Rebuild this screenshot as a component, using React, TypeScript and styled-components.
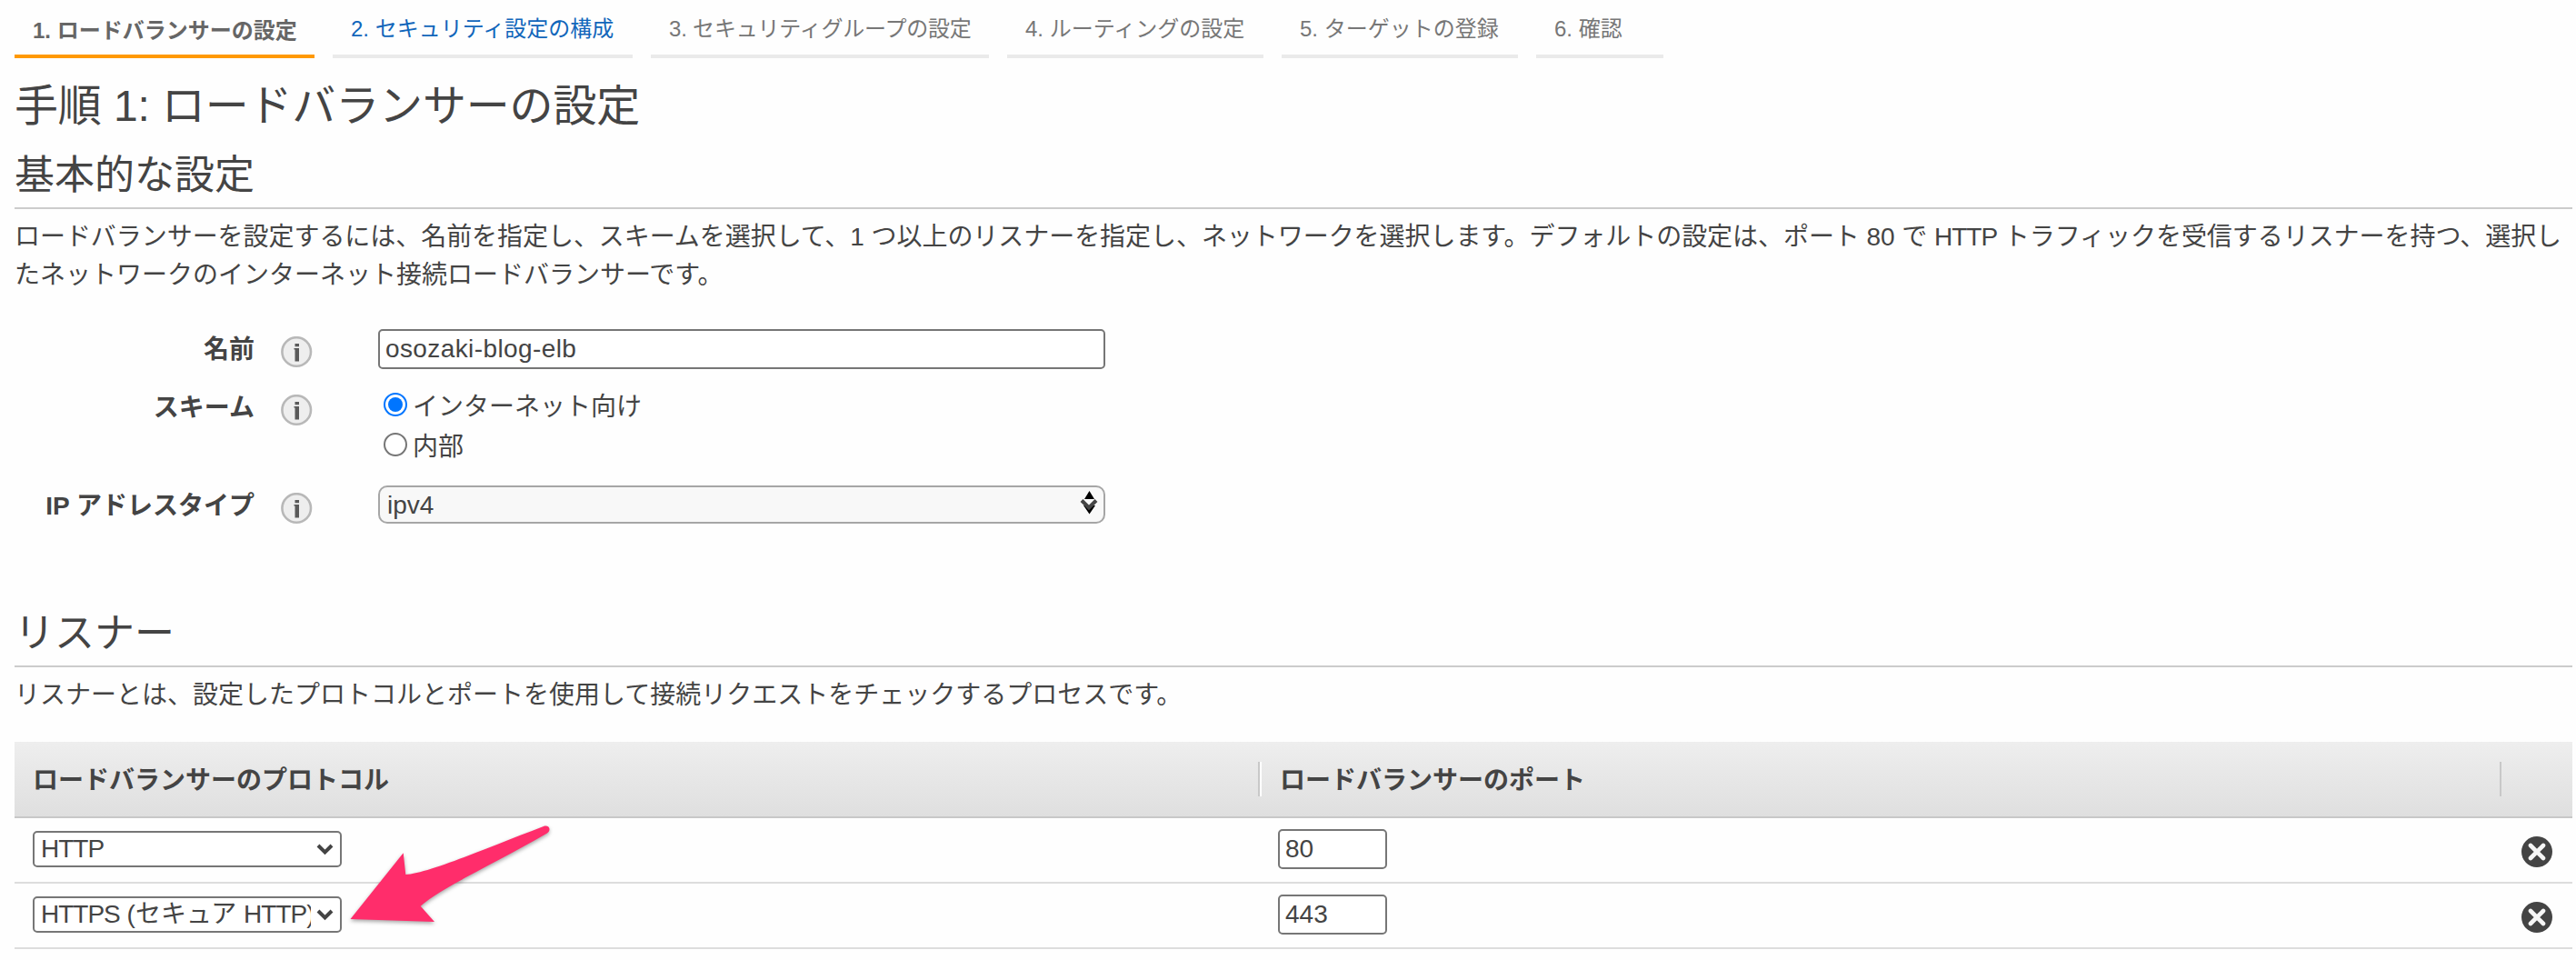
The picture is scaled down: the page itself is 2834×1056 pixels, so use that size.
import React from "react";
import styled, { createGlobalStyle } from "styled-components";

const Global = createGlobalStyle`
  *, *::before, *::after { box-sizing: border-box; }
  body { margin: 0; background: #fff; }
`;

const Page = styled.main`
  position: relative;
  width: 2834px;
  height: 1056px;
  overflow: hidden;
  padding: 0 4px 0 16px;
  background: #fefefe;
  color: #444;
  font: 28px/42px "Liberation Sans", "Noto Sans CJK JP", sans-serif;
`;

const Tabs = styled.nav`
  display: flex;
  gap: 20px;
  height: 64px;
`;

const Tab = styled.div<{ $width: number; $kind?: "active" | "link"; $track?: number }>`
  flex: none;
  width: ${(p) => p.$width}px;
  height: 64px;
  padding: ${(p) => (p.$kind === "active" ? 16 : 14)}px 0 0 20px;
  border-bottom: 4px solid ${(p) => (p.$kind === "active" ? "#ff9900" : "#eaeaea")};
  color: ${(p) => (p.$kind === "active" ? "#666" : p.$kind === "link" ? "#1166bb" : "#777")};
  font-size: 24px;
  line-height: 36px;
  font-weight: ${(p) => (p.$kind === "active" ? 700 : 400)};
  letter-spacing: ${(p) => p.$track ?? 0}px;
  white-space: nowrap;
`;

const Title = styled.h1`
  margin: 20px 0 0;
  height: 66px;
  font-size: 48px;
  line-height: 66px;
  font-weight: 400;
  letter-spacing: -0.15px;
`;

const Heading = styled.h2<{ $top: number }>`
  margin: ${(p) => p.$top}px 0 0;
  height: 70px;
  border-bottom: 2px solid #ccc;
  font-size: 44px;
  line-height: 66px;
  font-weight: 400;
`;

const Paragraph = styled.p`
  margin: 10px 0 0;
  white-space: nowrap;
`;

const TightLine = styled.span`
  letter-spacing: -0.05px;
`;

const Latin = styled.span`
  letter-spacing: -1px;
`;

const Form = styled.form`
  display: flex;
  flex-direction: column;
  margin-top: 38px;
`;

const Field = styled.div<{ $height: number }>`
  display: grid;
  grid-template-columns: 264px 29px 35px 72px 800px;
  align-items: start;
  height: ${(p) => p.$height}px;
`;

const Label = styled.label`
  grid-column: 1;
  padding-top: 2px;
  font-weight: 700;
  text-align: right;
  white-space: nowrap;
`;

const InfoSlot = styled.span`
  grid-column: 3;
  height: 35px;
  margin-top: 8px;
  svg { display: block; }
`;

const Control = styled.div`
  grid-column: 5;
`;

const TextInput = styled.input<{ $width: number; $track?: number }>`
  display: block;
  width: ${(p) => p.$width}px;
  height: 44px;
  padding: 0 6px;
  border: 2px solid #767676;
  border-radius: 5px;
  outline: 0;
  background: #fff;
  color: #444;
  font: inherit;
  letter-spacing: ${(p) => p.$track ?? 0}px;
`;

const Option = styled.label`
  display: flex;
  align-items: center;
  height: 44px;
  padding-left: 6px;
  gap: 6px;
`;

const Radio = styled.span<{ $on?: boolean }>`
  display: grid;
  place-items: center;
  width: 26px;
  height: 26px;
  margin-top: -6px;
  border: 2px solid ${(p) => (p.$on ? "#0075ff" : "#767676")};
  border-radius: 50%;
  background: #fff;
  &::after {
    content: "";
    width: 16px;
    height: 16px;
    border-radius: 50%;
    background: ${(p) => (p.$on ? "#0075ff" : "transparent")};
  }
`;

const WideSelect = styled.div`
  display: flex;
  justify-content: space-between;
  width: 800px;
  height: 42px;
  padding: 0 6px 0 8px;
  border: 2px solid #a6a6a6;
  border-radius: 10px;
  background: #f8f8f8;
  line-height: 40px;
  svg { display: block; margin-top: 4px; }
`;

const Select = styled.div`
  display: flex;
  align-items: center;
  justify-content: space-between;
  width: 340px;
  height: 40px;
  padding: 0 7px 0 7px;
  border: 2px solid #767676;
  border-radius: 5px;
  background: #fff;
  svg { display: block; flex: none; }
`;

const SelectText = styled.span`
  width: 297px;
  line-height: 36px;
  overflow: hidden;
  white-space: nowrap;
`;

const Table = styled.section`
  margin-top: 30px;
`;

const columns = "1370px 1366px 78px";

const HeadRow = styled.div`
  display: grid;
  grid-template-columns: ${columns};
  align-items: center;
  height: 84px;
  border-bottom: 2px solid #c8c8c8;
  background: linear-gradient(#eee, #dfdfdf);
  font-weight: 700;
`;

const HeadCell = styled.div<{ $first?: boolean; $last?: boolean }>`
  height: 38px;
  padding-left: 20px;
  border-right: ${(p) => (p.$last ? "0" : "2px solid #c8c8c8")};
  border-left: ${(p) => (p.$first || p.$last ? "0" : "2px solid #fff")};
  line-height: 41px;
`;

const Row = styled.div`
  display: grid;
  grid-template-columns: ${columns};
  align-items: center;
  height: 72px;
  border-bottom: 2px solid #ddd;
`;

const Cell = styled.div`
  padding: 0 20px 2px;
`;

const RemoveCell = styled.div`
  padding: 4px 0 0 22px;
  svg { display: block; }
`;

const Pointer = styled.svg`
  position: absolute;
  left: 370px;
  top: 890px;
  filter: drop-shadow(0 2px 2px rgba(0, 0, 0, 0.35));
`;

const Info = () => (
  <InfoSlot>
    <svg width="35" height="35" viewBox="0 0 35 35">
      <circle cx="17.2" cy="17" r="15.800" fill="#eee" stroke="#b8b8b8" strokeWidth="2.6" />
      <path d="M15.500 8h4.500v3.200h-4.500zM14.500 13H20v14.500h-4.500V14.500h-1z" fill="#5a5a5a" />
    </svg>
  </InfoSlot>
);

const Chevron = () => (
  <svg width="19" height="14" viewBox="0 0 19 14">
    <path d="M2 3l7.5 7.5L17 3" fill="none" stroke="#444" strokeWidth="4" />
  </svg>
);

const Remove = () => (
  <svg width="34" height="34" viewBox="0 0 34 34">
    <circle cx="17" cy="17" r="17" fill="#444" />
    <path d="M10 10l14 14M24 10L10 24" stroke="#f6f6f6" strokeWidth="4.6" strokeLinecap="round" />
  </svg>
);

const listeners = [
  { protocol: <Latin>HTTP</Latin>, port: "80" },
  { protocol: <><Latin>HTTPS</Latin> (セキュア <Latin>HTTP</Latin>)</>, port: "443" },
];

export default function App() {
  return (
    <Page lang="ja">
      <Global />
      <Tabs>
        <Tab $width={330} $kind="active">1. ロードバランサーの設定</Tab>
        <Tab $width={330} $kind="link">2. セキュリティ設定の構成</Tab>
        <Tab $width={372} $track={-0.2}>3. セキュリティグループの設定</Tab>
        <Tab $width={282}>4. ルーティングの設定</Tab>
        <Tab $width={260}>5. ターゲットの登録</Tab>
        <Tab $width={140}>6. 確認</Tab>
      </Tabs>
      <Title>手順 1: ロードバランサーの設定</Title>
      <Heading $top={10}>基本的な設定</Heading>
      <Paragraph>
        <TightLine>
          ロードバランサーを設定するには、名前を指定し、スキームを選択して、1 つ以上のリスナーを指定し、ネットワークを選択します。デフォルトの設定は、ポート 80 で <Latin>HTTP</Latin> トラフィックを受信するリスナーを持つ、選択し
        </TightLine>
        <br />
        たネットワークのインターネット接続ロードバランサーです。
      </Paragraph>
      <Form>
        <Field $height={64}>
          <Label>名前</Label>
          <Info />
          <Control>
            <TextInput $width={800} $track={0.4} defaultValue="osozaki-blog-elb" />
          </Control>
        </Field>
        <Field $height={108}>
          <Label>スキーム</Label>
          <Info />
          <Control>
            <Option><Radio $on />インターネット向け</Option>
            <Option><Radio />内部</Option>
          </Control>
        </Field>
        <Field $height={126}>
          <Label>IP アドレスタイプ</Label>
          <Info />
          <Control>
            <WideSelect>
              ipv4
              <svg width="20" height="26" viewBox="0 0 20 26">
                <path d="M10.5 0l5.5 9H5zM4 16h13l-6.500 9.500z" fill="#000" />
                <path d="M2 10.500l8 8 8-8" fill="none" stroke="#444" strokeWidth="4" />
              </svg>
            </WideSelect>
          </Control>
        </Field>
      </Form>
      <Heading $top={4}>リスナー</Heading>
      <Paragraph>リスナーとは、設定したプロトコルとポートを使用して接続リクエストをチェックするプロセスです。</Paragraph>
      <Table>
        <HeadRow>
          <HeadCell $first>ロードバランサーのプロトコル</HeadCell>
          <HeadCell>ロードバランサーのポート</HeadCell>
          <HeadCell $last />
        </HeadRow>
        {listeners.map((l) => (
          <Row key={l.port}>
            <Cell>
              <Select>
                <SelectText>{l.protocol}</SelectText>
                <Chevron />
              </Select>
            </Cell>
            <Cell>
              <TextInput $width={120} defaultValue={l.port} />
            </Cell>
            <RemoveCell><Remove /></RemoveCell>
          </Row>
        ))}
      </Table>
      <Pointer width="250" height="140" viewBox="0 0 250 140">
        <path
          d="M15.500 121L73.700 48.300L76.300 72C100 71 165 43 228 19C234 17 237 23 232 26.500C178 58 116 86 92.700 106.700L108 124Z"
          fill="#ff2d6b"
        />
      </Pointer>
    </Page>
  );
}
